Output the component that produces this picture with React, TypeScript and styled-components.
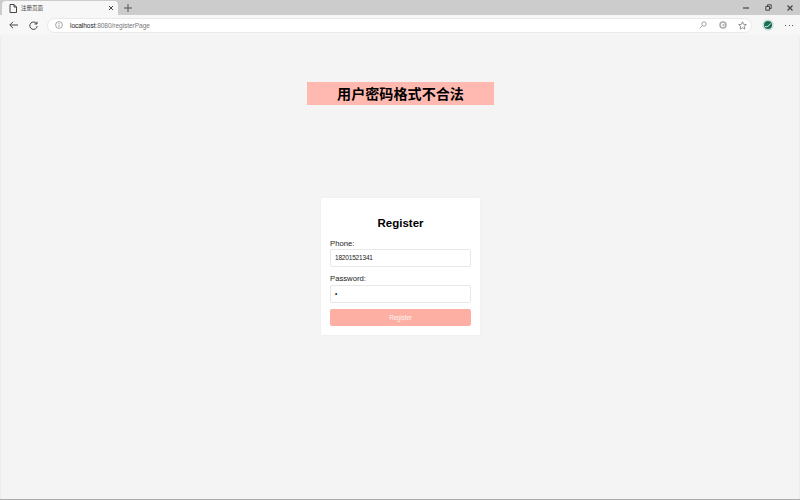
import React from "react";
import styled, { createGlobalStyle } from "styled-components";

const Global = createGlobalStyle`
  html, body { margin: 0; padding: 0; width: 800px; height: 500px; overflow: hidden; background: #f4f4f4; }
  * { box-sizing: border-box; }
`;
const Win = styled.div`
  width: 800px; height: 500px; display: flex; flex-direction: column;
  font-family: "Liberation Sans", "Noto Sans CJK SC", sans-serif; background: #f7f7f7;
`;
const TabStrip = styled.div`
  height: 15px; flex: none; display: flex; align-items: flex-end; padding-left: 2px; background: #cccccc;
`;
const Tab = styled.div`
  width: 116px; height: 14px; background: #f7f7f7; border-radius: 4px 4px 0 0; display: flex; align-items: center;
  padding: 0 4px 0 7px; gap: 4px;
`;
const TabTitle = styled.span`
  flex: 1; font-size: 5.500px; color: #444; font-family: "Noto Sans CJK SC", sans-serif; white-space: nowrap;
`;
const NewTab = styled.div`
  width: 16px; height: 14px; margin-left: 2px; display: flex; align-items: center; justify-content: center;
`;
const WinControls = styled.div`
  margin-left: auto; margin-right: -1px; height: 15px; display: flex; align-items: center;
`;
const WinBtn = styled.div`
  width: 22px; height: 15px; display: flex; align-items: center; justify-content: center;
`;
const Toolbar = styled.div`
  height: 20px; flex: none; background: #f7f7f7; display: flex; align-items: center; padding-left: 7px;
`;
const NavBtn = styled.div`
  width: 12px; height: 20px; flex: none; display: flex; align-items: center; justify-content: center; margin-right: 8px;
`;
const Address = styled.div`
  width: 705px; height: 15px; flex: none; background: #fff; border-radius: 8px; border: 1px solid #e9e9e9;
  display: flex; align-items: center; padding: 0 4px 0 7px;
`;
const Url = styled.span`
  margin-left: 7px; font-size: 6.600px; letter-spacing: -0.07px; color: #777; flex: 1;
  b { font-weight: 400; color: #222; }
`;
const AddrIcons = styled.div`
  display: flex; align-items: center; gap: 11.500px;
`;
const Profile = styled.div`
  margin-left: 10px; width: 12px; height: 12px; flex: none; display: flex;
`;
const Dots = styled.div`
  margin-left: 11px; width: 8px; flex: none; display: flex; justify-content: space-between;
  i { width: 1px; height: 1px; background: #555; display: block; }
`;
const PageArea = styled.main`
  flex: 1; background: #f4f4f4; border-radius: 4px 4px 0 0; border-left: 1px solid #ececec; border-right: 1px solid #ececec;
  display: flex; flex-direction: column; align-items: center; padding-top: 47px;
`;
const Banner = styled.div`
  width: 187px; height: 23px; margin-left: 1px; background: #ffb9b0; color: #000; font-weight: 700; font-size: 14.100px; line-height: 22px; text-align: center;
  font-family: "Noto Sans CJK SC", sans-serif;
`;
const Card = styled.form`
  margin-top: 93px; margin-left: 1px; width: 159px; height: 137px; background: #fff; border-radius: 2px; padding: 0 9px;
  box-shadow: 0 0 3px rgba(0,0,0,0.04); display: flex; flex-direction: column;
`;
const Title = styled.h2`
  margin: 17px 0 0; height: 16px; line-height: 16px; font-size: 11.500px; font-weight: 700; text-align: center; color: #000;
`;
const Label = styled.label<{ $mt: number; $mb: number }>`
  display: block; font-size: 7.700px; line-height: 11px; color: #222;
  margin-top: ${(p) => p.$mt}px; margin-bottom: ${(p) => p.$mb}px;
`;
const Input = styled.div`
  height: 18px; flex: none; border: 1px solid #e8e8e8; border-radius: 2px; background: #fff; font-size: 6.500px; letter-spacing: -0.18px; line-height: 16px; color: #222; padding: 0 4px;
`;
const Submit = styled.div`
  margin-top: 6px; height: 17px; flex: none; background: #fdafa3; border-radius: 2px; color: #fff0ee; font-size: 6.500px; letter-spacing: -0.2px; line-height: 17px; text-align: center;
`;
const Bottom = styled.div`
  height: 1px; flex: none; background: #a9a9a9;
`;

const s = { fill: "none", stroke: "#444", strokeWidth: 1 } as const;
const l = { fill: "none", stroke: "#999", strokeWidth: 0.9 } as const;

export default function App() {
  return (
    <Win>
      <Global />
      <TabStrip>
        <Tab>
          <svg width="8" height="9" viewBox="0 0 8 9"><path d="M1 .5h4l2.500 2.500v5.500h-6.500z M5 .5v2.500h2.500" {...s} /></svg>
          <TabTitle>注册页面</TabTitle>
          <svg width="6" height="6" viewBox="0 0 6 6"><path d="M1 1l4 4M5 1l-4 4" {...s} /></svg>
        </Tab>
        <NewTab>
          <svg width="8" height="8" viewBox="0 0 8 8"><path d="M4 0v8M0 4h8" {...s} stroke="#555" /></svg>
        </NewTab>
        <WinControls>
          <WinBtn><svg width="6" height="2" viewBox="0 0 6 2"><path d="M0 1h6" {...s} strokeWidth={1.2} /></svg></WinBtn>
          <WinBtn><svg width="7" height="7" viewBox="0 0 7 7"><path d="M.8 2.500h3.700v3.700h-3.700z M2.500 2.200v-1.400h3.700v3.700h-1.500" {...s} /></svg></WinBtn>
          <WinBtn><svg width="6" height="6" viewBox="0 0 6 6"><path d="M.5.5l5 5M5.500.5l-5 5" {...s} strokeWidth={1.2} /></svg></WinBtn>
        </WinControls>
      </TabStrip>
      <Toolbar>
        <NavBtn><svg width="9" height="8" viewBox="0 0 9 8"><path d="M9 4H1M4 .8L.8 4 4 7.200" {...s} /></svg></NavBtn>
        <NavBtn><svg width="9" height="9" viewBox="0 0 9 9"><path d="M7.800 3A3.700 3.700 0 1 0 8.200 5M8 .6V3H5.600" {...s} /></svg></NavBtn>
        <Address>
          <svg width="8" height="8" viewBox="0 0 8 8"><circle cx="4" cy="4" r="3.400" {...l} /><path d="M4 3.500v2.500M4 2v.9" {...l} /></svg>
          <Url><b>localhost</b>:8080/registerPage</Url>
          <AddrIcons>
            <svg width="8" height="8" viewBox="0 0 8 8"><circle cx="5" cy="3" r="2.200" {...l} /><path d="M3.400 4.600L.8 7.200" {...l} /></svg>
            <svg width="8" height="8" viewBox="0 0 8 8"><circle cx="4" cy="4" r="3" fill="none" stroke="#aaa" strokeWidth="1.500" /><circle cx="4.500" cy="4" r="1.200" fill="#bbb" /></svg>
            <svg width="9" height="9" viewBox="0 0 9 9"><path d="M4.500.8l1.100 2.500 2.700.3-2 1.800.6 2.700-2.400-1.400-2.400 1.400.6-2.700-2-1.800 2.700-.3z" fill="none" stroke="#777" strokeWidth="0.800" /></svg>
          </AddrIcons>
        </Address>
        <Profile>
          <svg width="12" height="12" viewBox="0 0 12 12"><circle cx="6" cy="6" r="5.800" fill="#cfe3dc" /><circle cx="6" cy="6" r="4" fill="#1c6e5a" /><path d="M3 7.500c2 .8 4-.5 5.500-3" stroke="#dfeee9" strokeWidth="1" fill="none" /></svg>
        </Profile>
        <Dots><i /><i /><i /></Dots>
      </Toolbar>
      <PageArea>
        <Banner>用户密码格式不合法</Banner>
        <Card>
          <Title>Register</Title>
          <Label $mt={7} $mb={0}>Phone:</Label>
          <Input>18201521341</Input>
          <Label $mt={6} $mb={1}>Password:</Label>
          <Input>•</Input>
          <Submit>Register</Submit>
        </Card>
      </PageArea>
      <Bottom />
    </Win>
  );
}
